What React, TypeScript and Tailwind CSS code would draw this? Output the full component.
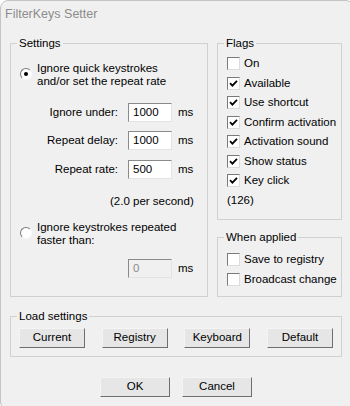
import React from "react";

const font = { fontFamily: '"Liberation Sans", Arial, sans-serif' };

function Check({ checked, label }: { checked: boolean; label: string }) {
  return (
    <div className="flex h-[19.5px] items-center whitespace-nowrap pl-[9px]">
      <div className="flex h-[13px] w-[13px] shrink-0 items-center justify-center border border-t-[#7a7a7a] border-l-[#7a7a7a] border-r-[#dcdcdc] border-b-[#dcdcdc] bg-white">
        {checked && (
          <svg width="9" height="9" viewBox="0 0 9 9">
            <path d="M1 4.2 L3.4 6.6 L8 1.8" fill="none" stroke="#000" strokeWidth="1.8" />
          </svg>
        )}
      </div>
      <span className="ml-[4px]">{label}</span>
    </div>
  );
}

function Radio({ checked, lines }: { checked: boolean; lines: string[] }) {
  return (
    <div className="flex pl-[9px]">
      <div className="mt-[6px] flex h-[12px] w-[12px] shrink-0 items-center justify-center rounded-full border border-t-[#7a7a7a] border-l-[#7a7a7a] border-r-[#f8f8f8] border-b-[#f8f8f8] bg-white">
        {checked && <div className="h-[4px] w-[4px] rounded-full bg-black" />}
      </div>
      <div className="ml-[5px] whitespace-nowrap leading-[13px]">
        {lines.map((l) => (
          <div key={l}>{l}</div>
        ))}
      </div>
    </div>
  );
}

function Field({ label, value, className }: { label: string; value: string; className?: string }) {
  return (
    <div className={"flex h-[19px] items-center " + (className ?? "")}>
      <div className="w-[107px] whitespace-nowrap text-right">{label}</div>
      <div className="ml-[10px] flex h-[19px] w-[44px] items-center border border-t-[#8a8a8a] border-l-[#8a8a8a] border-r-[#e3e3e3] border-b-[#e3e3e3] bg-white pl-[4px]">
        {value}
      </div>
      <span className="ml-[6px]">ms</span>
    </div>
  );
}

function Button({ label, w }: { label: string; w: string }) {
  return (
    <div
      className={
        "flex h-[20px] items-center justify-center border border-t-[#f4f4f4] border-l-[#f4f4f4] border-r-[#6e6e6e] border-b-[#6e6e6e] bg-[#e6e6e6] " +
        w
      }
    >
      {label}
    </div>
  );
}

export default function App() {
  return (
    <div className="h-[406px] w-[350px] overflow-hidden bg-white" style={font}>
      <div className="flex h-[410px] w-[354px] flex-col rounded-[8px] border border-[#c4c4c4] bg-[#f0f0f0] text-[11.5px] text-black">
        <div className="flex h-[27px] items-center pl-[4px] text-[12.5px] text-[#8c8c8c]">FilterKeys Setter</div>
        <div className="mt-[8px] flex pl-[9px]">
          <fieldset className="h-[261px] w-[198px] border border-[#d0d0d0]">
            <legend className="ml-[6px] px-[2px] leading-[14px]">Settings</legend>
            <div className="mt-[12px]">
              <Radio checked lines={["Ignore quick keystrokes", "and/or set the repeat rate"]} />
            </div>
            <Field className="mt-[15px]" label="Ignore under:" value="1000" />
            <Field className="mt-[9px]" label="Repeat delay:" value="1000" />
            <Field className="mt-[10px]" label="Repeat rate:" value="500" />
            <div className="mt-[15px] pl-[99px] leading-[14px]">(2.0 per second)</div>
            <div className="mt-[13px]">
              <Radio checked={false} lines={["Ignore keystrokes repeated", "faster than:"]} />
            </div>
            <div className="mt-[12px] flex h-[19px] items-center">
              <div className="ml-[117px] flex h-[19px] w-[44px] items-center border border-t-[#8a8a8a] border-l-[#8a8a8a] border-r-[#e3e3e3] border-b-[#e3e3e3] bg-[#f0f0f0] pl-[4px] text-[#8a8a8a]">
                0
              </div>
              <span className="ml-[6px]">ms</span>
            </div>
          </fieldset>
          <div className="ml-[9px] flex w-[125px] flex-col">
            <fieldset className="h-[184px] border border-[#d0d0d0]">
              <legend className="ml-[6px] px-[2px] leading-[14px]">Flags</legend>
              <div className="mt-[4px]">
                <Check checked={false} label="On" />
                <Check checked label="Available" />
                <Check checked label="Use shortcut" />
                <Check checked label="Confirm activation" />
                <Check checked label="Activation sound" />
                <Check checked label="Show status" />
                <Check checked label="Key click" />
                <div className="flex h-[19.5px] items-center pl-[9px]">(126)</div>
              </div>
            </fieldset>
            <fieldset className="mt-[10px] h-[67px] border border-[#d0d0d0]">
              <legend className="ml-[6px] px-[2px] leading-[14px]">When applied</legend>
              <div className="mt-[6px]">
                <Check checked={false} label="Save to registry" />
                <Check checked={false} label="Broadcast change" />
              </div>
            </fieldset>
          </div>
        </div>
        <div className="mt-[12px] pl-[9px]">
          <fieldset className="h-[48px] w-[332px] border border-[#d0d0d0]">
            <legend className="ml-[6px] px-[2px] leading-[14px]">Load settings</legend>
            <div className="mt-[5px] flex justify-between px-[8px]">
              <Button label="Current" w="w-[66px]" />
              <Button label="Registry" w="w-[66px]" />
              <Button label="Keyboard" w="w-[66px]" />
              <Button label="Default" w="w-[66px]" />
            </div>
          </fieldset>
        </div>
        <div className="mt-[20px] flex gap-[12px] pl-[99px]">
          <Button label="OK" w="w-[70px]" />
          <Button label="Cancel" w="w-[70px]" />
        </div>
      </div>
    </div>
  );
}
